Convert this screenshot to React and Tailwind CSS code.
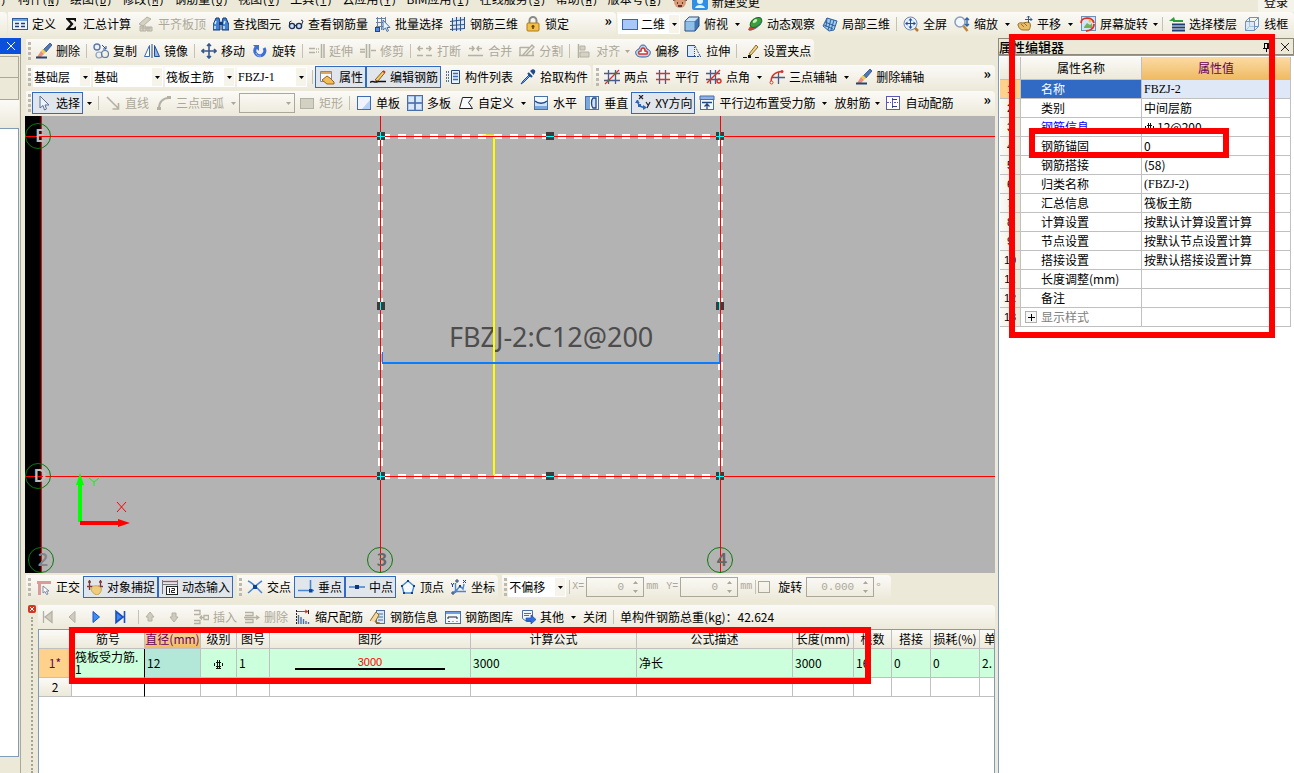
import React from "react";

const NAVY = "#24477f";
const GREY = "#b4b1a3";

const ICONS = {
  define: (
    <>
      <rect x="0.5" y="2.5" width="15" height="11" fill="#eef4fd" stroke="#2f5a9c" />
      <path d="M1 3h14v2H1z" fill="#6f9fe0" />
      <path d="M3 7.5h4M3 10.5h4M9 7.5h4M9 10.5h4" stroke="#1d3f78" strokeWidth="1.5" />
    </>
  ),
  sigma: <path d="M3 2h10v3.500h-1l-1-1.500H7L10.500 8 7 12h4l1-1.500h1V14H3v-1l4.500-5L3 3z" fill="#111" />,
  slab: (
    <>
      <path d="M1 8l8-7 4 2-8 7zM2 10h6v5H2zM9 11h5v4H9z" fill="#d5d2c4" stroke={GREY} />
      <path d="M3 12h10M5 10v5M11 11v4" stroke={GREY} />
    </>
  ),
  binoc: (
    <>
      <path d="M3 2h3l1 4v8H0V9zM13 2h-3L9 6v8h7V9z" fill="#3f82d0" stroke="#173a72" />
      <path d="M2 8l1-3M11 8l1-3M2 10v3M11 10v3" stroke="#d4e9ff" strokeWidth="1.500" />
      <path d="M6 6h4v3H6z" fill="#173a72" />
    </>
  ),
  glasses: (
    <>
      <circle cx="4" cy="10" r="2.600" fill="#cfe0f5" stroke="#1b2f55" strokeWidth="1.400" />
      <circle cx="11" cy="10" r="2.600" fill="#cfe0f5" stroke="#1b2f55" strokeWidth="1.400" />
      <path d="M6.500 9.500h2M1.500 9V6l2-1M13.500 9l1.500-4-2-1" fill="none" stroke="#1b2f55" />
    </>
  ),
  batch: (
    <>
      <path d="M1 2.500h10M1 6.500h10M1 10.500h10M2.500 1v13M6.500 1v13M10.500 1v10" stroke="#6b7f9f" />
      <rect x="0.500" y="11.500" width="4" height="4" fill="#4c8bea" stroke={NAVY} />
      <path d="M8 4v10l2.500-2 1.500 3.500 1.500-.8-1.500-3.200h3z" fill="#e8f2ff" stroke="#4b6da5" />
    </>
  ),
  cage: (
    <>
      <path d="M1 4l4-3h10v11l-4 3H1z" fill="#dbe8fa" />
      <path d="M2.500 2v13M6.500 1v14M10.500 1v14M14.500 1v12M0 5.500l15-2M0 9.500l15-1M0 13.500l15-1" stroke="#2f5288" fill="none" />
    </>
  ),
  lock: (
    <>
      <path d="M4.500 8V4.500a3.500 3.500 0 0 1 7 0V8" fill="none" stroke="#8b8b86" strokeWidth="2" />
      <rect x="2" y="7" width="12" height="8" rx="1" fill="#f3c04a" stroke="#b07a14" />
      <path d="M8 9v4M6.500 10.500h3" stroke="#6b4304" strokeWidth="1.500" />
    </>
  ),
  plan: <rect x="0.500" y="3.500" width="15" height="10" fill="#a9c8fa" stroke="#3766b8" />,
  cube: (
    <>
      <path d="M1 5l4-4h10v9l-4 5H1z" fill="#3f75b5" stroke="#27496f" />
      <path d="M1.500 5L5 1.500h9.500L11 5z" fill="#c7e3f8" />
      <path d="M1.500 5.500h9v9h-9z" fill="#8fbfe8" />
    </>
  ),
  orbit: (
    <>
      <path d="M1 14c1-3 3-5 5-6l4 3c-3 3-6 4-9 3z" fill="#d33f2a" />
      <ellipse cx="9" cy="6.500" rx="6.500" ry="4" transform="rotate(-35 9 6.500)" fill="#3aa03c" stroke="#1e6b28" />
      <ellipse cx="8" cy="5" rx="2.500" ry="1.500" transform="rotate(-35 8 5)" fill="#c5f0b8" />
      <path d="M2 14c6 0 11-4 13-9" stroke="#4a6f9f" fill="none" />
    </>
  ),
  local3d: (
    <>
      <path d="M1 10l4-8 10 3-3 9-5 1z" fill="#9fcaf0" stroke="#2e619c" />
      <path d="M3 6l10 4M5 2l-1 9M9 3l-3 11M12 4l-3 10M2 9l9 4" stroke="#2e619c" fill="none" />
    </>
  ),
  full: (
    <>
      <circle cx="7.500" cy="7.500" r="6.500" fill="#e7f1ff" stroke="#7187ab" />
      <path d="M7.500 2l2 2.500h-4zM7.500 13l2-2.500h-4zM2 7.500l2.500-2v4zM13 7.500l-2.500-2v4z" fill="#204f9c" />
      <path d="M7.500 3v9M3 7.500h9" stroke="#204f9c" />
      <path d="M12 12l3 3" stroke="#b57b32" strokeWidth="2.500" />
    </>
  ),
  zoom: (
    <>
      <circle cx="6" cy="6" r="5" fill="#f2f7fd" stroke="#8b9db8" strokeWidth="1.500" />
      <path d="M9.500 10l4 5" stroke="#c08334" strokeWidth="2.500" />
      <path d="M13 2v8M11 4l2-2 2 2M11 8l2 2 2-2" stroke="#2d62ad" fill="none" strokeWidth="1.400" />
    </>
  ),
  pan: (
    <>
      <path d="M1 8c2-2 4-1 5-1l5-1c3 0 3 5 1 8H6c-3 0-5-3-5-6z" fill="#e8bd6a" stroke="#9c6f25" />
      <path d="M4 8l3 3M7 7l3 3" stroke="#9c6f25" />
      <path d="M11.500 0v7M8 3.500h7M10 1.500l1.500-1.500L13 1.500M13.500 2l1.500 1.500L13.500 5" stroke="#3a5481" fill="none" />
    </>
  ),
  rotview: (
    <>
      <rect x="1.500" y="0.500" width="14" height="14" fill="#cfe6fa" stroke="#6d8fb5" />
      <path d="M4 11l3-4 3 2 2-2v5H4z" fill="#74b255" />
      <path d="M1 7c0-6 11-7 13 0M14 8c0 5-5 7-8 7" stroke="#dd3126" strokeWidth="1.800" fill="none" />
      <circle cx="10" cy="5" r="1.500" fill="#f0c33f" />
    </>
  ),
  floors: (
    <>
      <path d="M3 8.500h13M3 11.500h13M3 14.500h13" stroke="#1c3e78" strokeWidth="2" />
      <path d="M5 1l-5 4h4v1h10V4H6z" fill="#2f9d3a" />
    </>
  ),
  wire: (
    <>
      <path d="M1.500 5.500h9v9h-9zM5.500 1.500h9v9h-9zM1.500 5.500l4-4M10.500 5.500l4-4M10.500 14.500l4-4M1.500 14.500l4-4" fill="none" stroke="#6c94bf" />
      <path d="M2 6h8v8H2z" fill="#cfe2f5" opacity="0.600" />
    </>
  ),
  brush: (
    <>
      <path d="M14 0l2 2-6 7-3-2z" fill="#4b78ba" stroke="#27426d" strokeWidth="0.700" />
      <path d="M7 6l3 3-2 2-3-3z" fill="#f1cf4e" />
      <path d="M5 8l3 3-3 3H1z" fill="#e9907f" />
      <path d="M0 14.500h11" stroke="#27426d" strokeWidth="2" />
    </>
  ),
  copy: (
    <>
      <circle cx="4" cy="4" r="3" fill="#eaf3ff" stroke="#5d7ba6" strokeWidth="1.400" />
      <circle cx="6" cy="12" r="3" fill="none" stroke="#8aa1c0" strokeWidth="1.200" />
      <circle cx="12" cy="11" r="3.500" fill="none" stroke="#5d7ba6" strokeWidth="1.200" />
      <path d="M9 2l4 4M13 3v3h-3" stroke="#274f92" fill="none" />
    </>
  ),
  mirror: (
    <>
      <path d="M5.500 2.500v11h-5z" fill="#fff" stroke="#3c68a8" />
      <path d="M10.500 2.500v11h5z" fill="#8db4ea" stroke="#254d8d" />
      <path d="M8 1v14" stroke="#254d8d" />
    </>
  ),
  move: (
    <path d="M8 1v14M1 8h14M6 3l2-2 2 2M6 13l2 2 2-2M3 6L1 8l2 2M13 6l2 2-2 2" stroke="#37588a" strokeWidth="1.600" fill="none" />
  ),
  rotate: (
    <>
      <path d="M4 4.500A5 5 0 1 0 12 5" fill="none" stroke="#3d6fd0" strokeWidth="3.200" />
      <path d="M1 2h6v6z" fill="#3d6fd0" />
      <path d="M4 10a4 4 0 0 0 5 3" fill="none" stroke="#9dbdf3" />
    </>
  ),
  extend: <path d="M0 5.500h6M0 9.500h6M7 6h1M9 6h1M7 9h1M9 9h1M12.500 1v14M15 1v14" stroke={GREY} strokeWidth="1.500" />,
  trim: <path d="M6.500 1v14M9.500 1v14M0 6.500h5M0 9h5M11 7.500h5" stroke={GREY} strokeWidth="1.600" />,
  breakk: (
    <path d="M0 12.500h6M9 12.500h6M1 5.500h5M3 3L1 5.500 3 8M9 5.500h5M12 3l2 2.500L12 8" stroke={GREY} strokeWidth="1.500" fill="none" />
  ),
  merge: (
    <path d="M0 12.500h15M1 5.500h5M4 3l2 2.500L4 8M9 5.500h5M11 3L9 5.500 11 8" stroke={GREY} strokeWidth="1.500" fill="none" />
  ),
  split: <path d="M1 4.500h10M1 4v8M0 12.500h15M14 8v5M3 13L13 2l2 2-8 8" stroke={GREY} strokeWidth="1.400" fill="none" />,
  align: (
    <>
      <path d="M2.500 1v14" stroke={GREY} strokeWidth="1.500" />
      <path d="M4 3h5v4H4zM4 9h9v5H4z" fill="#d5d2c4" stroke={GREY} />
    </>
  ),
  offset: (
    <>
      <path d="M8 2c3 0 3 2 4 4 3 1 4 3 3 5-1 3-4 3-7 3s-6 0-7-3c-1-2 0-4 3-5 1-2 1-4 4-4z" fill="#b9d3ef" stroke="#345f98" />
      <path d="M8 5c2 0 2 2 2 3 2 0 3 1 2 3H4c-1-2 0-3 2-3 0-1 0-3 2-3z" fill="#fff" stroke="#d8352c" strokeWidth="1.500" />
    </>
  ),
  stretch: (
    <>
      <path d="M8 2.500H1.500v11H8" fill="#dde9f8" stroke="#274f92" />
      <path d="M8.500 2v12" stroke="#274f92" strokeDasharray="1 1" />
      <path d="M9 3l5 10M8 13.500h7" stroke="#274f92" strokeDasharray="2 1" fill="none" />
    </>
  ),
  grips: (
    <>
      <path d="M0 14.500h4M12 14.500h4" stroke="#111" />
      <path d="M5 12h3v3H5z" fill="#111" />
      <path d="M6 11L13 2l2 2-7 8z" fill="#ecd58a" stroke="#8b6b2a" />
    </>
  ),
  prop: (
    <>
      <path d="M1.500 2.500h11v10h-11z" fill="#f7f9fd" stroke="#7b8ba6" />
      <path d="M2 3h10v2H2z" fill="#e0a65a" />
      <path d="M3 11l5-4 3 2 4 4v2H8z" fill="#f2bd55" stroke="#99641a" />
    </>
  ),
  editbar: (
    <>
      <path d="M0 13.500c3-3 4 1 8-1h8" stroke="#111" strokeWidth="1.500" fill="none" />
      <path d="M5 11L13 2l2 1.500L8 12z" fill="#f1cd62" stroke="#8b5a22" />
      <path d="M13 2l2 1.500" stroke="#c8302a" strokeWidth="2" />
    </>
  ),
  list: (
    <>
      <path d="M6.500 1.500h8v13h-8z" fill="#eaf2fc" stroke={NAVY} />
      <path d="M8 4.500h5M8 7.500h5M8 10.500h5" stroke="#3b6cb7" strokeWidth="1.500" />
      <path d="M1 3h3M1 6h3M1 9h3M1 12h3" stroke={NAVY} strokeWidth="1.500" strokeDasharray="1 1" />
    </>
  ),
  dropper: (
    <>
      <path d="M10 2l2-1.500c2-1 4 1 3 3L13.500 6z" fill="#1f4b8e" />
      <path d="M8 4l4 4" stroke="#1f4b8e" strokeWidth="2.200" />
      <path d="M9 6L3 12l-2 3 3-2 6-6z" fill="#7fb7ea" stroke="#1f4b8e" />
    </>
  ),
  twopt: (
    <>
      <path d="M4.500 1v14M11.500 1v14M0 4.500h16M0 11.500h16" stroke="#4a5a8c" strokeWidth="1.300" />
      <path d="M1 15L15 1" stroke="#d8322c" strokeWidth="1.300" />
      <path d="M3.500 10.500h2v2h-2zM10.500 3.500h2v2h-2z" fill="#2b8a34" />
    </>
  ),
  parallel: (
    <>
      <path d="M4.500 1v14M10.500 1v14" stroke="#4a5a8c" strokeWidth="1.300" />
      <path d="M1 4.500h14M1 10.500h14" stroke="#d8322c" strokeWidth="1.300" />
    </>
  ),
  ptangle: (
    <>
      <path d="M4.500 1v14M9.500 1v14M0 4.500h14M0 10.500h14" stroke="#4a5a8c" strokeWidth="1.300" />
      <path d="M1 14L14 1" stroke="#d8322c" strokeWidth="1.500" />
      <circle cx="13" cy="12" r="2" fill="none" stroke="#d8322c" strokeWidth="1.400" />
    </>
  ),
  threept: (
    <>
      <path d="M9.500 3v12M3 8.500h13" stroke="#4a5a8c" strokeWidth="1.300" />
      <path d="M2 13C2 7 5 3 13 2.500" stroke="#d8322c" strokeWidth="1.400" fill="none" />
      <circle cx="13" cy="2.500" r="1.500" fill="#d8322c" />
      <circle cx="2.500" cy="13.500" r="1.500" fill="#fff" stroke="#d8322c" />
    </>
  ),
  cursor: <path d="M4 1v12l3-2.500L8.500 15l2-1L9 10h4z" fill="#eef4ff" stroke="#5a6f96" />,
  line: <path d="M2 2l11 11M13.500 8v6h-6" stroke={GREY} strokeWidth="1.600" fill="none" />,
  arc: (
    <>
      <path d="M3 13C3 7 7 3 13 3" stroke={GREY} strokeWidth="1.800" fill="none" />
      <path d="M1 12h4v3H1zM11 1h4v3h-4z" fill={GREY} />
    </>
  ),
  rect: <rect x="1.500" y="3.500" width="13" height="10" fill="#d3d0c4" stroke={GREY} />,
  single: (
    <>
      <rect x="1.500" y="1.500" width="13" height="13" fill="#edf4fe" stroke="#3d6cb4" />
      <path d="M14 5v9H6z" fill="#b5d0f7" />
    </>
  ),
  multi: (
    <>
      <rect x="0.500" y="0.500" width="15" height="15" fill="#a9c9f1" stroke="#4a6fa5" />
      <path d="M8 1v14M1 8h14" stroke="#4a6fa5" strokeWidth="1.500" />
      <path d="M2 2h5v5H2zM9 2h5v5H9zM2 9h5v5H2zM9 9h5v5H9z" fill="#d9e8fb" />
    </>
  ),
  poly: <path d="M4.500 2.500h10l-4 5 4 6h-13z" fill="#f8fbff" stroke="#222" />,
  horiz: (
    <>
      <rect x="1.500" y="1.500" width="13" height="13" fill="#cfe1f8" stroke="#4a6fa5" />
      <path d="M2 2h12v4c-3 3-9 3-12 0z" fill="#f4f9ff" />
      <path d="M2 6c3 3 9 3 12 0" stroke={NAVY} strokeWidth="1.300" fill="none" />
      <path d="M2 11h12v3H2z" fill="#7ba6de" />
    </>
  ),
  vert: (
    <>
      <rect x="1.500" y="1.500" width="13" height="13" fill="#f4f9ff" stroke="#4a6fa5" />
      <path d="M2 2h4v12H2z" fill="#7ba6de" />
      <path d="M12 3H9c-2 2-2 8 0 10h3z" fill="#cfe1f8" stroke={NAVY} strokeWidth="1.300" />
    </>
  ),
  xy: (
    <>
      <path d="M4 0l4 4M8 0L4 4M11 7l2 3M15 7l-3 6" stroke="#223" strokeWidth="1.200" />
      <path d="M2.500 5c0 5 3 7 7 7.500" stroke="#2f66b4" strokeWidth="1.600" fill="none" />
      <path d="M0 8l2-3 3 3zM8 10l4 2.500-4 2.500zM3 9h3v3H3z" fill="#2f66b4" />
    </>
  ),
  edge: (
    <>
      <path d="M1 1h14v4H1z" fill="#8fb2e8" stroke="#4a6fa5" />
      <rect x="1.500" y="4.500" width="13" height="10" fill="#f5f9ff" stroke="#4a6fa5" />
      <path d="M3 7.500h10M8 14V9M5.500 11.500L8 9l2.500 2.500" stroke={NAVY} strokeWidth="1.300" fill="none" />
    </>
  ),
  auto: (
    <>
      <rect x="1.500" y="1.500" width="13" height="13" fill="#fff" stroke="#5a57b8" />
      <path d="M7.500 3v10" stroke="#5a57b8" />
      <path d="M2 7.500h4M9 7.500h4" stroke="#5a57b8" strokeDasharray="2 1" />
      <path d="M12 4.500H7M7 11.500h5" stroke="#333a8c" fill="none" />
    </>
  ),
  ortho: (
    <>
      <path d="M1 2h14v3H5v11H2V5H1z" fill="#d99a9a" />
      <path d="M7 7v7l2-1.500 1.500 3L12 15l-1.500-3H13z" fill="#fff" stroke="#7b8ba6" />
    </>
  ),
  snap: (
    <>
      <path d="M2.500 1v10M13.500 1v10M0 7.500h6M11 7.500h5M1 3h3M12 3h3" stroke="#7a3a3a" strokeWidth="1.300" />
      <path d="M4 9c2-3 8-3 10 0 1 3-1 6-4 7-3-1-6-3-6-7z" fill="#f0cd7c" stroke="#c9a252" />
    </>
  ),
  dyn: (
    <>
      <path d="M0 2.500h16" stroke="#b05050" strokeWidth="1.300" />
      <path d="M0 5.500h16" stroke="#777" />
      <path d="M.5 1v14M15.500 1v6" stroke="#777" />
      <rect x="4.500" y="7.500" width="11" height="8" fill="#fff" stroke="#222" />
      <path d="M7.500 9v5M9.500 9.500h3v2h-3v2h3.500" stroke="#222" fill="none" />
    </>
  ),
  cross: (
    <>
      <path d="M1 2c5 2 9 7 14 12M15 2C10 5 6 10 1 14" stroke="#4a86cf" strokeWidth="1.500" fill="none" />
      <rect x="6" y="6" width="4" height="4" fill="#0c4591" />
    </>
  ),
  perp: (
    <>
      <path d="M12.500 1v10M0 11.500h16" stroke="#4a86cf" strokeWidth="1.600" />
      <rect x="11" y="10" width="3.500" height="3.500" fill="#0c4591" />
    </>
  ),
  mid: (
    <>
      <path d="M0 8h16" stroke="#4a86cf" strokeWidth="1.600" />
      <rect x="6" y="6" width="4" height="4" fill="#0c3480" />
    </>
  ),
  vertex: (
    <>
      <path d="M8 2l6 5-2 7H4L2 7z" fill="#f5faff" stroke="#4a86cf" strokeWidth="1.400" />
      <path d="M7 1h2v2H7zM1 6h2v2H1zM13 6h2v2h-2zM3 13h2v2H3zM11 13h2v2h-2z" fill="#0c4591" />
    </>
  ),
  coord: (
    <>
      <path d="M4.500 4v10M3 12.500h12M5 12l4-5 3 3 1-5" stroke="#4a86cf" strokeWidth="1.400" fill="none" />
      <path d="M0 4l1.500 2L3 4M1.500 6v2M12 1l3 3M15 1l-3 3M1 13h2v2H1zM5 1h2v2H5z" stroke="#23406f" fill="none" />
      <path d="M8 6h2v2H8z" fill="#0c4591" />
    </>
  ),
  first: <path d="M3.500 2v12M12 2.500v11L5 8z" fill="#cfccbf" stroke={GREY} strokeWidth="1.300" />,
  prev: <path d="M11 2.500v11L5 8z" fill="#cfccbf" stroke={GREY} />,
  next: <path d="M5 2.500v11L11.500 8z" fill="#3f8cf2" stroke="#1b4fc0" />,
  last: <path d="M4 2.500v11L11 8zM12.500 2v12" fill="#3f8cf2" stroke="#1b4fc0" strokeWidth="1.600" />,
  up: <path d="M8 3l4 5h-2v4H6V8H4z" fill="#cfccbf" stroke={GREY} />,
  down: <path d="M8 13l4-5h-2V4H6v4H4z" fill="#cfccbf" stroke={GREY} />,
  insert: <path d="M1 1.500h6v4H1M1 11.500h6v3H1M7 8.500h4M9 6.500l-2 2 2 2M11 6.500h4.500v4H11z" fill="none" stroke={GREY} strokeWidth="1.300" />,
  remove: <path d="M1 3.500h8v3H1M1 10.500h8v3H1M0 8.500h15M12 6.500l3 2-3 2" fill="none" stroke={GREY} strokeWidth="1.300" />,
  scale: (
    <>
      <path d="M1.500 1v14" stroke="#222" strokeDasharray="2 1" />
      <path d="M2 2.500h10M10 1l3 1.500L10 4" stroke="#d8322c" fill="none" />
      <path d="M13.500 1v4" stroke="#222" />
      <path d="M3.500 6v9M6 8v7M8.500 10v5M11 12v3M13.500 13v2" stroke="#4a6fa5" strokeWidth="1.400" />
    </>
  ),
  info: (
    <>
      <rect x="6.500" y="1.500" width="8" height="13" fill="#dbe8fa" stroke="#4a6fa5" />
      <path d="M8 5h5M8 8h5M8 11h5" stroke="#4a6fa5" />
      <path d="M0 12L6 3l3 3-4 7 5 1" fill="#f2d9a0" stroke="#8b6b2a" />
    </>
  ),
  lib: (
    <>
      <rect x="0.500" y="2.500" width="15" height="12" fill="#f2f7ff" stroke="#4a6fa5" />
      <path d="M1 3h14v2H1z" fill="#6f9fe0" />
      <path d="M3 10V8h9v2" stroke="#222" fill="none" />
      <path d="M3 12.500h2" stroke="#d8322c" />
      <path d="M7 12.500h2M11 12.500h2" stroke="#e0a020" />
    </>
  ),
  other: (
    <>
      <path d="M2.500 1.500h10v11h-6l-4-3z" fill="#f2f7ff" stroke="#4a6fa5" />
      <path d="M4 4.500h7M4 6.500h5" stroke="#4a6fa5" />
      <path d="M6 9h5V6l5 4.500-5 4.500v-3H6z" fill="#2f70e0" stroke="#1b4a9f" strokeWidth="0.700" />
    </>
  ),
  face: (
    <>
      <circle cx="8" cy="8" r="6" fill="#d89a78" />
      <path d="M1 7c1-7 13-7 14 0l-3-1H4z" fill="#4b2b1d" />
      <path d="M5 9h1M10 9h1M6 12h4" stroke="#4b1414" strokeWidth="1.500" />
    </>
  ),
  badge: (
    <>
      <rect x="0" y="0" width="16" height="16" rx="2" fill="#2f8fe4" />
      <circle cx="8" cy="7" r="3" fill="#e4f3ff" />
      <path d="M3 14c1-4 9-4 10 0z" fill="#e4f3ff" />
    </>
  ),
};

function Icon({ name }) {
  return (
    <svg viewBox="0 0 16 16" className="h-4 w-4 shrink-0" aria-hidden="true">
      {ICONS[name]}
    </svg>
  );
}

function Tool({ icon, label, active, disabled }) {
  return (
    <button
      type="button"
      disabled={disabled}
      className={
        "flex h-[22px] shrink-0 items-center gap-1 pr-[3px] pl-1 whitespace-nowrap " +
        (active ? "bg-[#e1e6ec] outline outline-1 -outline-offset-1 outline-[#316ac5] " : "") +
        (disabled ? "text-[#aca899]" : "text-black")
      }
    >
      {icon && <Icon name={icon} />}
      {label}
    </button>
  );
}

function IconTool({ icon, label, disabled }) {
  return (
    <button type="button" aria-label={label} disabled={disabled} className="flex h-[22px] w-6 shrink-0 items-center pl-px">
      <Icon name={icon} />
    </button>
  );
}

function Caret({ disabled }) {
  return (
    <svg viewBox="0 0 5 3" className={"h-[3px] w-[5px] shrink-0 " + (disabled ? "text-[#aca899]" : "text-black")} aria-hidden="true">
      <path d="M0 0h5L2.500 3z" fill="currentColor" />
    </svg>
  );
}

function Arrow({ wide, disabled, label }) {
  return (
    <button
      type="button"
      aria-label={label}
      disabled={disabled}
      className={"flex h-[22px] shrink-0 items-center justify-center " + (wide ? "w-3" : "w-2")}
    >
      <Caret disabled={disabled} />
    </button>
  );
}

const Sep = () => (
  <span className="flex w-1.5 shrink-0 justify-center">
    <span className="h-[14px] w-px bg-[#c5c2b4]" />
  </span>
);

const Grip = () => (
  <span className="mr-px ml-0.5 flex w-[3px] shrink-0 flex-col gap-0.5">
    <span className="h-[3px] bg-[#bdbaad]" />
    <span className="h-[3px] bg-[#bdbaad]" />
    <span className="h-[3px] bg-[#bdbaad]" />
    <span className="h-[3px] bg-[#bdbaad]" />
  </span>
);

const More = () => (
  <button type="button" aria-label="更多" className="shrink-0 self-start px-1 text-sm leading-4 font-bold">
    »
  </button>
);

function Strip({ className = "", children }) {
  return (
    <div className={"flex h-6 items-center rounded-r bg-linear-to-b from-[#fbfaf7] to-[#edeadb] " + className}>{children}</div>
  );
}

function Combo({ label, value, width, serif, icon, disabled }) {
  return (
    <div
      className={
        "relative flex h-5 shrink-0 items-center gap-0.5 " +
        (disabled ? "border border-[#aca899] " : "bg-white ") +
        width
      }
    >
      {icon && <Icon name={icon} />}
      <select
        aria-label={label}
        disabled={disabled}
        className={"h-full w-full min-w-0 appearance-none bg-transparent px-px outline-none " + (serif ? "font-['Liberation_Serif']" : "")}
      >
        <option>{value}</option>
      </select>
      <span
        className={
          "pointer-events-none absolute inset-y-px right-px flex w-[10px] items-center justify-center " +
          (disabled ? "" : "bg-[#f5f3ea]")
        }
      >
        <Caret disabled={disabled} />
      </span>
    </div>
  );
}

function Spin({ label, value, width }) {
  return (
    <div className={"flex h-5 shrink-0 items-center border border-[#aca899] text-[#aca899] " + width}>
      <input
        aria-label={label}
        disabled
        defaultValue={value}
        className="w-full min-w-0 bg-transparent pr-2 text-right font-['Liberation_Mono'] text-[11px] outline-none"
      />
      <svg viewBox="0 0 7 14" className="mr-1 h-[14px] w-[7px] shrink-0" aria-hidden="true">
        <path d="M1 4h5L3.500 1zM1 10h5l-2.500 3z" fill="#aca899" />
      </svg>
    </div>
  );
}

const MENUS = [
  ["构件", "N"], ["绘图", "D"], ["修改", "M"], ["钢筋量", "Q"], ["视图", "V"], ["工具", "T"],
  ["云应用", "Y"], ["BIM应用", "I"], ["在线服务", "S"], ["帮助", "H"], ["版本号", "B"],
];

function MenuBar() {
  return (
    <nav className="flex h-3 items-end gap-[10px] overflow-hidden leading-5">
      <span className="w-2 font-['Liberation_Mono'] text-[10px]">)</span>
      {MENUS.map(([name, key]) => (
        <button type="button" key={name} className="shrink-0 whitespace-nowrap">
          {name}
          <span className="font-['Liberation_Mono'] text-[10px]">
            (<u>{key}</u>)
          </span>
        </button>
      ))}
      <span className="flex items-center gap-1">
        <Icon name="face" />
        <Icon name="badge" />
        <button type="button">新建变更</button>
      </span>
      <button type="button" className="ml-auto bg-[#f5f3ea] px-1.5">登录</button>
    </nav>
  );
}

function ViewBar() {
  return (
    <div className="flex gap-px overflow-hidden">
      <Strip className="w-[7px] shrink-0" />
      <Strip className="w-[608px] shrink-0">
        <Tool icon="define" label="定义" />
        <Tool icon="sigma" label="汇总计算" />
        <Tool icon="slab" label="平齐板顶" disabled />
        <Tool icon="binoc" label="查找图元" />
        <Tool icon="glasses" label="查看钢筋量" />
        <Tool icon="batch" label="批量选择" />
        <Tool icon="cage" label="钢筋三维" />
        <Tool icon="lock" label="锁定" />
        <span className="flex-1" />
        <More />
      </Strip>
      <Strip className="min-w-0 flex-1 pl-px">
        <Combo label="视图模式" value="二维" width="w-[62px] pl-1" icon="plan" />
        <Tool icon="cube" label="俯视" />
        <Arrow wide label="俯视选项" />
        <Tool icon="orbit" label="动态观察" />
        <Tool icon="local3d" label="局部三维" />
        <Sep />
        <Tool icon="full" label="全屏" />
        <Tool icon="zoom" label="缩放" />
        <Arrow wide label="缩放选项" />
        <Tool icon="pan" label="平移" />
        <Arrow wide label="平移选项" />
        <Tool icon="rotview" label="屏幕旋转" />
        <Arrow label="屏幕旋转选项" />
        <Sep />
        <Tool icon="floors" label="选择楼层" />
        <Tool icon="wire" label="线框" />
      </Strip>
    </div>
  );
}

function EditBars() {
  return (
    <div className="flex flex-col gap-0.5 pt-px pb-px pl-px">
      <Strip className="w-fit">
        <Grip />
        <Tool icon="brush" label="删除" />
        <Sep />
        <Tool icon="copy" label="复制" />
        <Tool icon="mirror" label="镜像" />
        <Sep />
        <Tool icon="move" label="移动" />
        <Tool icon="rotate" label="旋转" />
        <Sep />
        <Tool icon="extend" label="延伸" disabled />
        <Tool icon="trim" label="修剪" disabled />
        <Sep />
        <Tool icon="breakk" label="打断" disabled />
        <Tool icon="merge" label="合并" disabled />
        <Tool icon="split" label="分割" disabled />
        <Sep />
        <Tool icon="align" label="对齐" disabled />
        <Arrow label="对齐选项" disabled />
        <Tool icon="offset" label="偏移" />
        <Tool icon="stretch" label="拉伸" />
        <Sep />
        <Tool icon="grips" label="设置夹点" />
      </Strip>
      <div className="flex gap-0.5">
        <Strip className="shrink-0">
          <Grip />
          <div className="flex gap-0.5 pr-0.5 pl-px">
            <Combo label="楼层" value="基础层" width="w-[58px]" />
            <Combo label="构件类别" value="基础" width="w-[70px]" />
            <Combo label="构件类型" value="筏板主筋" width="w-[70px]" />
            <Combo label="构件" value="FBZJ-1" width="w-[70px]" serif />
          </div>
          <Sep />
          <Tool icon="prop" label="属性" active />
          <Tool icon="editbar" label="编辑钢筋" active />
          <Tool icon="list" label="构件列表" />
          <Tool icon="dropper" label="拾取构件" />
        </Strip>
        <Strip className="min-w-0 flex-1 pl-px">
          <Grip />
          <Tool icon="twopt" label="两点" />
          <Tool icon="parallel" label="平行" />
          <Tool icon="ptangle" label="点角" />
          <Arrow wide label="点角选项" />
          <Tool icon="threept" label="三点辅轴" />
          <Arrow wide label="三点辅轴选项" />
          <Tool icon="brush" label="删除辅轴" />
          <span className="flex-1" />
          <More />
        </Strip>
      </div>
      <Strip>
        <Grip />
        <Tool icon="cursor" label="选择" active />
        <Arrow wide label="选择选项" />
        <Sep />
        <Tool icon="line" label="直线" disabled />
        <Tool icon="arc" label="三点画弧" disabled />
        <Arrow wide label="三点画弧选项" disabled />
        <Combo label="半径" value="" width="w-14" disabled />
        <Tool icon="rect" label="矩形" disabled />
        <Sep />
        <Tool icon="single" label="单板" />
        <Tool icon="multi" label="多板" />
        <Tool icon="poly" label="自定义" />
        <Arrow wide label="自定义选项" />
        <Tool icon="horiz" label="水平" />
        <Tool icon="vert" label="垂直" />
        <Tool icon="xy" label="XY方向" active />
        <Tool icon="edge" label="平行边布置受力筋" />
        <Arrow wide label="布置选项" />
        <Tool label="放射筋" />
        <Arrow label="放射筋选项" />
        <Tool icon="auto" label="自动配筋" />
        <span className="flex-1" />
        <More />
      </Strip>
    </div>
  );
}

const HANDLES = [
  [356, 20, 1, 1], [525, 20, 1, 0], [695, 20, 1, 1],
  [356, 190, 0, 1], [695, 190, 0, 1],
  [356, 360, 1, 1], [525, 360, 1, 0], [695, 360, 1, 1],
];

const AXES = [
  [13, 20, "E", "#bdbdbd"],
  [13, 360, "D", "#bdbdbd"],
  [16, 444, "2", "#858585"],
  [355, 444, "3", "#666666"],
  [695, 444, "4", "#666666"],
];

function Drawing() {
  return (
    <svg className="block h-[457px] w-full shrink-0 bg-[#b3b3b3]" role="img" aria-label="平面图">
      <rect x="0" y="0" width="16" height="457" fill="#000" />
      <g stroke="#fff" strokeWidth="5" strokeDasharray="8 8" fill="none">
        <path d="M357 20.500h338M357 360.500h338M355.500 22v338M695.500 22v338" />
      </g>
      <text x="424" y="231" className="fill-[#4d4d4d] font-['Noto_Sans'] text-[27px]">FBZJ-2:C12@200</text>
      <path d="M469 21v338M458 19.500h11" stroke="#ff0" strokeWidth="2" />
      <path d="M357 247h338" stroke="#0a7cff" strokeWidth="2" />
      <path d="M357.500 236v11M694.500 236v11" stroke="#0a7cff" />
      {HANDLES.map(([x, y]) => (
        <rect key={x + "-" + y} x={x - 4} y={y - 4} width="8" height="8" fill="#3c3c3c" />
      ))}
      <path d="M16.500 0v457M355.500 0v457M695.500 0v457" stroke="#f00" />
      <line x1="0" y1="20.500" x2="100%" y2="20.500" stroke="#f00" />
      <line x1="0" y1="360.500" x2="100%" y2="360.500" stroke="#f00" />
      {AXES.map(([x, y, t, color]) => (
        <text key={t} x={x + 2} y={y + 6} textAnchor="middle" fill={color} className="font-['Noto_Sans'] text-[18px] font-semibold">
          {t}
        </text>
      ))}
      {HANDLES.map(([x, y, h, v]) => (
        <g key={x + "+" + y} stroke="#0ff">
          {h ? <path d={`M${x - 4} ${y + 0.5}h8`} /> : null}
          {v ? <path d={`M${x - 0.5} ${y - 4}v8`} /> : null}
        </g>
      ))}
      {AXES.map(([x, y, t]) => (
        <circle key={t} cx={x} cy={y} r="12.500" fill="none" stroke="#0a7a0a" />
      ))}
      <path d="M55 406v-38" stroke="#0f0" strokeWidth="4" />
      <path d="M55 357l4 12h-8z" fill="#0f0" />
      <path d="M55 407h39" stroke="#f00" strokeWidth="4" />
      <path d="M105 407l-12-4v8z" fill="#f00" />
      <path d="M64 362l5 4 5-4M69 366v4" stroke="#0f0" fill="none" />
      <path d="M92 386l9 10M101 386l-9 10" stroke="#f00" />
    </svg>
  );
}

function SnapBar() {
  return (
    <div className="flex gap-1 pt-0.5 pl-px">
      <Strip>
        <Grip />
        <Tool icon="ortho" label="正交" />
        <Tool icon="snap" label="对象捕捉" active />
        <Tool icon="dyn" label="动态输入" active />
      </Strip>
      <Strip>
        <Grip />
        <Tool icon="cross" label="交点" />
        <Tool icon="perp" label="垂点" active />
        <Tool icon="mid" label="中点" active />
        <Tool icon="vertex" label="顶点" />
        <Tool icon="coord" label="坐标" />
      </Strip>
      <Strip className="pr-2.5">
        <Grip />
        <Combo label="偏移方式" value="不偏移" width="w-[58px]" />
        <Sep />
        <span className="flex items-center gap-0.5 font-['Liberation_Mono'] text-[10px] text-[#aca899]">
          X=
          <Spin label="X" value="0" width="w-[58px]" />
          mm
        </span>
        <span className="flex items-center gap-0.5 pl-2 font-['Liberation_Mono'] text-[10px] text-[#aca899]">
          Y=
          <Spin label="Y" value="0" width="w-[58px]" />
          mm
        </span>
        <Sep />
        <label className="flex items-center gap-2 pr-1">
          <input type="checkbox" className="h-3 w-3 appearance-none border border-[#aca899]" />
          旋转
        </label>
        <Spin label="旋转角度" value="0.000" width="w-[68px]" />
        <span className="pl-0.5 text-[#aca899]">°</span>
      </Strip>
    </div>
  );
}

function SteelGrade() {
  return (
    <svg viewBox="0 0 11 11" className="inline-block h-[11px] w-[11px]" role="img" aria-label="三级钢">
      <path d="M3 3.500h5M3 7.500h5M1.500 4v3M9.500 4v3M4.500 1v9M6.500 1v9M3 9.500h5" stroke="#111" fill="none" />
    </svg>
  );
}

const BAR_HEADS = ["级别", "图号", "图形", "计算公式", "公式描述", "长度(mm)", "根数", "搭接", "损耗(%)"];
const HEAD_CELL = "border-r border-b border-[#c0c0c0] p-0 font-normal whitespace-nowrap";
const CELL = "border-r border-b border-[#c0c0c0] px-0.5 py-0";

function RebarTable() {
  return (
    <div className="relative flex flex-1 flex-col">
      <div className="flex-1 overflow-hidden border-t border-r border-l border-[#7f9db9] bg-white">
        <table className="w-full min-w-[955px] table-fixed border-separate border-spacing-0 leading-3">
          <colgroup>
            <col className="w-[33px]" />
            <col className="w-[73px]" />
            <col className="w-[56px]" />
            <col className="w-[36px]" />
            <col className="w-[33px]" />
            <col className="w-[201px]" />
            <col className="w-[166px]" />
            <col className="w-[156px]" />
            <col className="w-[61px]" />
            <col className="w-[38px]" />
            <col className="w-[39px]" />
            <col className="w-[49px]" />
            <col />
          </colgroup>
          <thead>
            <tr className="h-[19px] bg-linear-to-b from-[#fbfaf7] to-[#ece9d8]">
              <th className={HEAD_CELL} aria-label="序号" />
              <th className={HEAD_CELL}>筋号</th>
              <th className={HEAD_CELL + " bg-linear-to-b from-[#fbdba3] to-[#efbb63] text-[#660066]"}>直径(mm)</th>
              {BAR_HEADS.map((h) => (
                <th key={h} className={HEAD_CELL}>{h}</th>
              ))}
              <th className="overflow-hidden border-b border-[#c0c0c0] p-0 pl-1 text-left font-normal whitespace-nowrap">单</th>
            </tr>
          </thead>
          <tbody>
            <tr className="h-[29px] bg-[#ccffdb]">
              <th className={HEAD_CELL + " bg-[#ffd28c] text-[#660066]"}>1*</th>
              <td className="border-r border-b border-r-black border-b-[#c0c0c0] py-0 pr-1 pl-[3px] break-all">筏板受力筋.1</td>
              <td className={CELL + " bg-[#b3e8d8]"}>12</td>
              <td className={CELL + " text-center"}><SteelGrade /></td>
              <td className={CELL}>1</td>
              <td className={CELL}>
                <span className="mx-auto block w-[150px] border-b-2 border-black text-center font-['Liberation_Sans'] text-[11px] text-[#f00]">3000</span>
              </td>
              <td className={CELL}>3000</td>
              <td className={CELL}>净长</td>
              <td className={CELL}>3000</td>
              <td className={CELL}>16</td>
              <td className={CELL}>0</td>
              <td className={CELL}>0</td>
              <td className="overflow-hidden border-b border-[#c0c0c0] px-0.5 py-0 whitespace-nowrap">2.</td>
            </tr>
            <tr className="h-[19px]">
              <th className={HEAD_CELL + " bg-linear-to-b from-[#fbfaf7] to-[#ece9d8]"}>2</th>
              <td className="border-r border-b border-r-black border-b-[#c0c0c0] p-0" />
              {["a", "b", "c", "d", "e", "f", "g", "h", "i", "j"].map((k) => (
                <td key={k} className={CELL} />
              ))}
              <td className="border-b border-[#c0c0c0] p-0" />
            </tr>
          </tbody>
        </table>
      </div>
      <div className="pointer-events-none absolute -top-0.5 left-[31px] h-[57px] w-[802px] border-6 border-[#f00]" />
    </div>
  );
}

function RebarPanel() {
  return (
    <div className="flex flex-1 pt-1.5">
      <div className="flex w-[13px] shrink-0 flex-col items-center gap-1">
        <button type="button" aria-label="关闭面板" className="flex h-2 w-2 items-center justify-center rounded-xs bg-[#d2371f]">
          <svg viewBox="0 0 6 6" className="h-1.5 w-1.5" aria-hidden="true">
            <path d="M1 1l4 4M5 1L1 5" stroke="#fff" />
          </svg>
        </button>
        <span className="w-0 flex-1 border-l-2 border-dotted border-[#a5a294]" />
      </div>
      <div className="flex min-w-0 flex-1 flex-col">
        <Strip className="pl-px">
          <IconTool icon="first" label="首条" disabled />
          <IconTool icon="prev" label="上一条" disabled />
          <IconTool icon="next" label="下一条" />
          <IconTool icon="last" label="末条" />
          <Sep />
          <IconTool icon="up" label="上移" disabled />
          <IconTool icon="down" label="下移" disabled />
          <Tool icon="insert" label="插入" disabled />
          <Tool icon="remove" label="删除" disabled />
          <Tool icon="scale" label="缩尺配筋" />
          <Tool icon="info" label="钢筋信息" />
          <Tool icon="lib" label="钢筋图库" />
          <Tool icon="other" label="其他" />
          <Arrow wide label="其他选项" />
          <Tool label="关闭" />
          <Sep />
          <span className="pl-1 whitespace-nowrap">单构件钢筋总重(kg)：42.624</span>
        </Strip>
        <RebarTable />
      </div>
    </div>
  );
}

const PROPS = [
  ["名称", "FBZJ-2"],
  ["类别", "中间层筋"],
  ["钢筋信息", "12@200"],
  ["钢筋锚固", "0"],
  ["钢筋搭接", "(58)"],
  ["归类名称", "(FBZJ-2)"],
  ["汇总信息", "筏板主筋"],
  ["计算设置", "按默认计算设置计算"],
  ["节点设置", "按默认节点设置计算"],
  ["搭接设置", "按默认搭接设置计算"],
  ["长度调整(mm)", ""],
  ["备注", ""],
  ["显示样式", ""],
];

function PropertyPanel() {
  return (
    <aside className="relative flex w-[296px] shrink-0 flex-col">
      <div className="flex h-[17px] items-center border border-[#8d8a7c]">
        <h2 className="flex-1 text-[13px] leading-4 font-medium">属性编辑器</h2>
        <button type="button" aria-label="固定" className="px-1.5">
          <svg viewBox="0 0 9 10" className="h-[10px] w-[9px]" aria-hidden="true">
            <path d="M1 6.500h7M2.500 1v5M6.500 1v5M2 1.500h5M4.500 6v4M5.500 1v5" stroke="#000" fill="none" />
          </svg>
        </button>
        <button type="button" aria-label="关闭" className="px-1">
          <svg viewBox="0 0 8 8" className="h-2 w-2" aria-hidden="true">
            <path d="M0 0l8 8M8 0L0 8" stroke="#222" />
          </svg>
        </button>
      </div>
      <div className="flex-1 border-t border-l border-[#7f9db9] bg-white pt-px pr-[3px] pl-px">
        <table className="w-full table-fixed border-separate border-spacing-0 leading-4">
          <colgroup>
            <col className="w-[21px]" />
            <col className="w-[121px]" />
            <col />
          </colgroup>
          <thead>
            <tr className="h-[23px] bg-linear-to-b from-[#fbfaf7] to-[#ece9d8]">
              <th className={HEAD_CELL} aria-label="序号" />
              <th className={HEAD_CELL}>属性名称</th>
              <th className={HEAD_CELL + " bg-linear-to-b from-[#fbdba3] to-[#efbb63] text-[#660066]"}>属性值</th>
            </tr>
          </thead>
          <tbody>
            {PROPS.map(([name, value], i) => (
              <tr key={name} className="h-[19px]">
                <th className={HEAD_CELL + " font-['Liberation_Sans'] text-[11px] " + (i === 0 ? "bg-[#ffd28c] text-[#660066]" : "bg-linear-to-r from-[#fbfaf7] to-[#ece9d8]")}>
                  {i + 1}
                </th>
                <td
                  className={
                    "border-r border-b border-[#c0c0c0] p-0 " +
                    (i === 0 ? "bg-[#316ac5] text-white" : i === 2 ? "text-[#00f]" : i === 12 ? "text-[#808080]" : "")
                  }
                >
                  <span className="flex items-center">
                    <span className="flex w-5 shrink-0 justify-center">
                      {i === 12 && (
                        <button type="button" aria-label="展开" className="flex h-3 w-3 items-center justify-center border border-[#b0b0b0] bg-[#f6f6f6] leading-none text-black">
                          <svg viewBox="0 0 7 7" className="h-[7px] w-[7px]" aria-hidden="true">
                            <path d="M0 3.500h7M3.500 0v7" stroke="#000" />
                          </svg>
                        </button>
                      )}
                    </span>
                    {name}
                  </span>
                </td>
                <td className={CELL + (i === 0 ? " bg-[#dfe8f6]" : "")}>
                  <span className="flex items-center gap-0.5 whitespace-nowrap">
                    {i === 2 && <SteelGrade />}
                    <span className={i === 0 || i === 5 ? "font-['Liberation_Serif']" : ""}>{value}</span>
                  </span>
                </td>
              </tr>
            ))}
          </tbody>
        </table>
      </div>
      <div className="pointer-events-none absolute -top-1 left-[11px] h-[304px] w-[266px] border-6 border-[#f00]" />
      <div className="pointer-events-none absolute top-[90px] left-[31px] h-[30px] w-[200px] border-6 border-[#f00]" />
    </aside>
  );
}

function DockedPanel() {
  return (
    <div className="flex w-[25px] shrink-0 flex-col pr-1">
      <div className="flex h-4 items-center justify-center bg-[#0a50dc]">
        <button type="button" aria-label="关闭停靠栏">
          <svg viewBox="0 0 8 8" className="h-2 w-2" aria-hidden="true">
            <path d="M0 0l8 8M8 0L0 8" stroke="#fff" />
          </svg>
        </button>
      </div>
      <div className="flex flex-1 flex-col border-r border-[#aca899] pr-px">
        <div className="mt-0.5 h-[22px] border-t border-r border-b border-[#aca899]" />
        <div className="h-[22px] border-r border-b border-[#aca899]" />
        <div className="h-7 bg-linear-to-b from-[#fbfaf7] to-[#edeadb]" />
        <div className="flex-1 border-t border-r border-b border-[#7f9db9] bg-white" />
        <div className="h-4" />
      </div>
    </div>
  );
}

export default function App() {
  return (
    <div className="flex min-h-screen flex-col overflow-hidden bg-[#ece9d8] font-['Noto_Sans_CJK_SC',sans-serif] text-xs leading-4 text-black">
      <MenuBar />
      <ViewBar />
      <div className="flex flex-1 pt-0.5">
        <DockedPanel />
        <main className="flex min-w-0 flex-1 flex-col pr-[3px]">
          <EditBars />
          <Drawing />
          <SnapBar />
          <RebarPanel />
        </main>
        <PropertyPanel />
      </div>
    </div>
  );
}
